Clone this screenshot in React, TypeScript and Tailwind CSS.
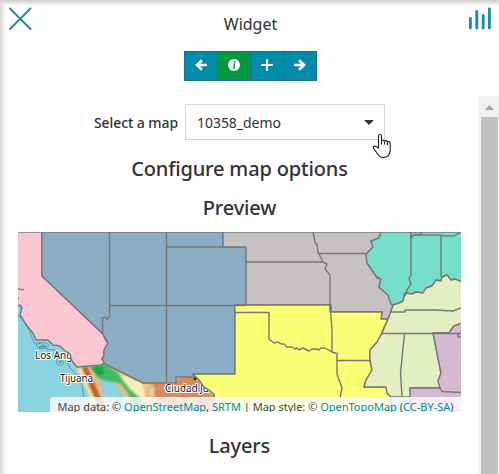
import React from "react";

const line = "#777777";

function MapPreview() {
  return (
    <svg className="block h-[180px] w-[443px]" viewBox="18 232 443 180">
      <defs>
        <filter id="soft" x="-20%" y="-20%" width="140%" height="140%">
          <feGaussianBlur stdDeviation="1.3" />
        </filter>
        <filter id="grain" x="0" y="0" width="100%" height="100%">
          <feTurbulence type="fractalNoise" baseFrequency="0.22" numOctaves="3" result="n" />
          <feColorMatrix in="n" type="matrix" values="0 0 0 0 0.55  0 0 0 0 0.22  0 0 0 0 0.08  2.2 0 0 0 -0.85" />
          <feComposite in2="SourceGraphic" operator="in" />
        </filter>
      </defs>
      <rect x="18" y="232" width="443" height="180" fill="#8bd3e1" />

      {/* Mexican relief */}
      <path d="M76 366L105 363L143 382L176 376L194 373L225 400V412H96L88 391L84 382Z" fill="#f0b985" />
      <g filter="url(#soft)">
        <path d="M80 368L87 366L95 385L102 401L103 412H97L91 397L85 384Z" fill="#bd5b2b" />
        <path d="M77 368L82 368L89 386L96 401L95 411L88 393Z" fill="#f5e3a3" />
        <path d="M90 367L105 364L118 373L132 382L141 398L148 412H137L128 393L120 383L112 382L104 381L98 378Z" fill="#3dbd65" />
        <path d="M91 367L103 365L104 374L98 377Z" fill="#18a84d" />
        <path d="M119 374L142 382L146 398L138 396L129 388Z" fill="#f7f0ba" />
        <path d="M148 384L178 379L192 375L220 402V412H157L145 396Z" fill="#d78e62" />
        <path d="M144 384L154 385L158 412H150Z" fill="#eecb92" />
        <path d="M99 379L106 381L116 384L126 398L133 412H112L103 395Z" fill="#8bd3e1" />
      </g>
      <path d="M145 384L178 378L194 375L224 402V412H150Z" fill="#fff" filter="url(#grain)" opacity=".55" />
      <g fill="none" stroke="#5f98a4" strokeWidth="1">
        <path d="M18 315L24 321L30 332L34 343L41 343L47 349L55 350L62 355L66 361L70 368L76 374L82 385L84 398" />
        <path d="M36 345Q43 340 49 345Q45 350 38 348ZM56 360Q60 357 64 363Q60 367 57 364Z" />
        <path d="M39 347L46 346M59 361L61 363" strokeWidth="2" />
      </g>
      <g fill="#111" stroke="#fff" strokeWidth="2.2" paintOrder="stroke" strokeLinejoin="round" className="font-['Noto_Sans'] text-[10px]">
        <text x="35" y="358.5">Los Ang</text>
        <text x="60" y="381.5" textLength="33">Tijuana</text>
        <text x="165" y="392" textLength="44">Ciudad Ju</text>
      </g>

      <g stroke={line} strokeWidth="1.4" strokeLinejoin="round">
        <path fill="#f9c6d4" d="M17 231H42V276L103 334L105 339L108 343L104 350L104 356L102 359L105 363L101 365L77 367L72 361L70 354L64 350L60 346L53 345L48 340L36 340L33 333L27 326L20 315L22 308L20 305L17 306Z" />
        <path fill="#8badc5" d="M42 231H223V247H246V305H235V374H193L194 377H176V383H143L105 364L102 359L104 356V350L108 343L103 334L42 276Z" />
        <path fill="#c7c2c2" d="M223 231H382L379 238L371 241L373 247L366 254L367 263L376 276L377 278L381 279L379 287L388 295L391 304L393 305L391 312L388 319H381L382 312H331V305H246V247H223Z" />
        <path fill="#faff75" d="M235 305H330V312H382L381 319H388L383 330L381 335L377 342L370 350V360L372 370L366 380L364 387H386L387 393L391 397V413H221L215 401L214 394L209 390L204 387L199 380L193 374H235Z" />
        <path fill="#75dfc9" d="M381 231H462V282L455 279L451 280L447 275L442 277L441 281L436 280L432 286L426 288L423 293L416 292L412 294L405 293L403 301L399 303L393 305L391 304L388 295L379 287L381 279L376 276L367 263L366 254L373 247L371 241L379 238Z" />
        <path fill="#e3eec3" d="M393 305L399 303L403 301L405 293L412 294L416 292L423 293L426 288L432 286L436 280L441 281L442 277L447 275L451 280L455 279L462 282V323L454 326L449 333H433L441 373L439 379L440 388H410L411 397H391L387 393L386 387H364L366 380L372 370L370 360V350L377 342L382 333L385 326L389 317Z" />
        <path fill="#d5bad2" d="M433 333H449L454 326L462 323V413H410V388H440L438 381L441 373Z" />
        <path fill="#91bdd3" d="M411 231H423L420 235H414L411 238Z" />
      </g>
      <g fill="none" stroke={line} strokeWidth="1.4" strokeLinejoin="round">
        <path d="M18 232.5H461" strokeWidth=".7" />
        <path d="M109.5 232V317L107 319L105 317L102.5 318V334M109.5 305.5H246M166.5 247V382M166.5 232V247H223" />
        <path d="M246 262H322M313 232L315 242L317 245L318 252L323 262L327 264L325 269L330 275V305L332 330V352M318 253.5H365" />
        <path d="M235 312.5H269V339L274 343L278 342L281 344L284 344L287 347L292 347L295 349L297 348L299 350L303 348L309 351L312 349L316 349L319 350L321 348L325 348L332 352L337 353.5V374L342 388L340 398M337 360.5H370" />
        <path d="M411 232V276L409 278L411 284L407 290L405 296M414 235H441V277M442 236L454 236L461 232" />
        <path d="M391 312H405V310H435L453 311L461 308M382 333.5H461M404.5 334L400.5 373L402 397M440 388L442 391.5L461 392.5M458 333V337H461" />
      </g>
      <path d="M18 289H20L22 290L24 289M18 298L19 299" stroke="#555" fill="none" />
      <circle cx="195" cy="379" r="1.4" fill="#222" />
    </svg>
  );
}

const toolButtons = ["left", "info", "plus", "right"];

function ToolIcon({ name }: { name: string }) {
  return (
    <svg className="h-3 w-3" viewBox="0 0 12 12" fill="none" stroke="white" strokeWidth="2.6">
      {name === "left" && <path d="M6.9 1.2L2 6L6.9 10.8M2 6H11.8" />}
      {name === "right" && <path d="M5.1 1.2L10 6L5.1 10.8M10 6H0.2" />}
      {name === "plus" && <path d="M6 0.2V11.8M0.2 6H11.8" strokeWidth="2.2" />}
      {name === "info" && (
        <>
          <circle cx="6" cy="6" r="6" fill="white" stroke="none" />
          <path d="M5 5H6.7L5.8 9H7.3M4.6 9H6" stroke="#009a3e" strokeWidth="1.2" />
          <circle cx="6.8" cy="2.8" r=".9" fill="#009a3e" stroke="none" />
        </>
      )}
    </svg>
  );
}

export default function App() {
  return (
    <div className="relative flex h-[474px] w-[499px] flex-col overflow-hidden bg-white font-['Noto_Sans','Open_Sans',sans-serif] text-[#333036]">
      <header className="flex h-[51px] items-start justify-between pl-[9px] pr-[7px] pt-[7px]">
        <svg className="h-6 w-6" viewBox="0 0 24 24" stroke="#168aa0" strokeWidth="1.8" strokeLinecap="round">
          <path d="M1 1.5L21.5 22M21.5 1.5L1 22" />
        </svg>
        <h1 className="pt-[5px] text-[16px] leading-6">Widget</h1>
        <svg className="h-6 w-6" viewBox="0 0 24 24" stroke="#168aa0" strokeWidth="2.8" strokeLinecap="round">
          <path d="M2.4 11.5V21M8.8 4.4V21M15.2 8.4V21M21.4 2V21" />
        </svg>
      </header>
      <nav className="flex h-[45px] justify-center pl-px">
        <div className="flex h-[30px] w-[133px] border border-[#147589]">
          {toolButtons.map((name) => (
            <div key={name} className={"flex flex-1 items-center justify-center border-r border-[#147589] pb-[2px] last:border-r-0 " + (name === "info" ? "bg-[#009a3e]" : "bg-[#008ba9]")}>
              <ToolIcon name={name} />
            </div>
          ))}
        </div>
      </nav>
      <div className="flex h-[378px]">
        <main className="flex w-[479px] flex-col items-center pt-2">
          <div className="flex h-9 items-center gap-[7px]">
            <label className="text-[14px] font-medium tracking-[-0.08px]">Select a map</label>
            <div className="flex h-9 w-[200px] items-center justify-between border border-[#d6d6da] pl-[11px] pr-[10px] text-[14px]">
              <span className="tracking-[-0.05px]">10358_demo</span>
              <svg className="h-[5px] w-[10px]" viewBox="0 0 10 5"><path d="M0 0H10L5 5Z" fill="#333" /></svg>
            </div>
          </div>
          <h2 className="mt-[15px] text-[20px] font-medium leading-7 tracking-[-0.16px]">Configure map options</h2>
          <h3 className="mt-[11px] text-[20px] font-medium leading-7 tracking-[-0.16px]">Preview</h3>
          <div className="relative mt-[10px] h-[180px] w-[443px]">
            <MapPreview />
            <div className="absolute bottom-0 right-0 flex h-[15px] w-[411px] justify-center overflow-hidden whitespace-pre rounded-tl-[3px] bg-white/80 text-[11px] leading-[19px] text-[#444]">
              Map data: © <span className="text-[#008b9f]">OpenStreetMap</span>, <span className="text-[#008b9f]">SRTM</span> | Map style: © <span className="text-[#008b9f]">OpenTopoMap</span> (<span className="text-[#008b9f]">CC-BY-SA</span>)
            </div>
          </div>
          <h3 className="mt-5 text-[20px] font-medium leading-7 tracking-[-0.16px]">Layers</h3>
        </main>
        <aside className="flex w-5 flex-col items-center bg-[#f1f1f1]">
          <div className="flex h-[21px] items-center pt-[2px]">
            <svg className="h-[5px] w-[9px]" viewBox="0 0 9 5"><path d="M0 5L4.5 0L9 5Z" fill="#a3a3a3" /></svg>
          </div>
          <div className="w-[17px] flex-1 bg-[#c1c1c1]" />
        </aside>
      </div>
      <svg className="absolute left-[372px] top-[133px] h-[26px] w-5" viewBox="0 0 20 26" fill="white" stroke="#1b1720" strokeWidth="1.1" strokeLinejoin="round">
        <path d="M6.5 15V3.5Q6.5 1.5 8 1.5T9.5 3.5V8Q11 6.5 12.5 8Q14.2 7 15.4 8.7Q17.8 8 18.2 10.5V17.5Q17.5 24.5 11.5 24.5Q7 24.5 5 20L1.3 15Q1 12.5 3.4 13.2Z" />
        <path d="M9.5 8V11.5M12.5 8.5V11.5M15.4 9V12" fill="none" />
      </svg>
      <div className="pointer-events-none absolute inset-x-0 top-0 h-[6px] bg-gradient-to-b from-[#cfcfcf] to-transparent" />
      <div className="pointer-events-none absolute inset-y-0 left-0 w-[6px] bg-gradient-to-r from-[#d8d8d8] to-transparent" />
    </div>
  );
}
